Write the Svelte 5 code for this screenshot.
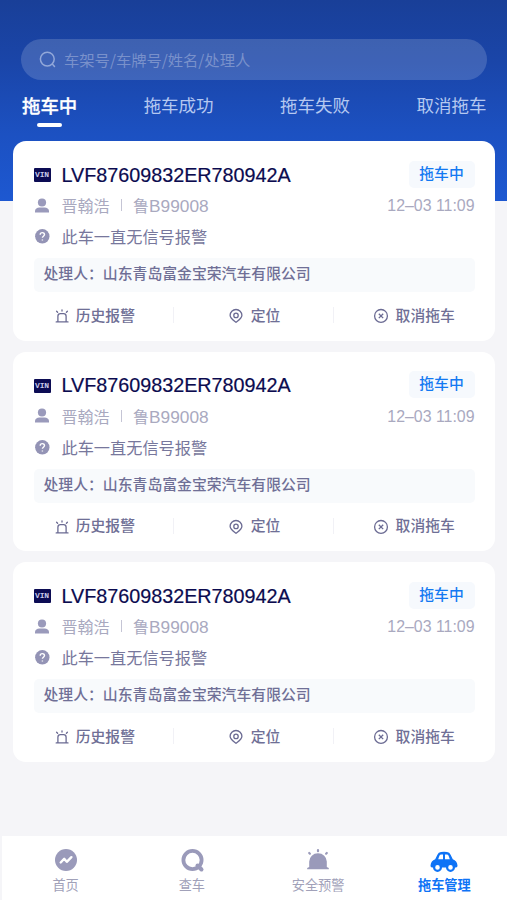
<script>
  const tabs = ['拖车中', '拖车成功', '拖车失败', '取消拖车'];
  const cards = [1, 2, 3];
</script>

<div class="page">
  <header>
    <div class="search">
      <svg width="18" height="18" viewBox="0 0 18 18" fill="none" stroke="#92a8d9" stroke-width="1.5" stroke-linecap="round"><circle cx="8.3" cy="9.1" r="6.9" /><path d="M13.3 14.1l2.2 2.4" /></svg>
      <span>车架号/车牌号/姓名/处理人</span>
    </div>
    <nav class="tabs">
      {#each tabs as tab, i}
        <span class="tab" class:active={i === 0}>{tab}</span>
      {/each}
    </nav>
  </header>

  <main>
    {#each cards as card (card)}
      <article>
        <div class="row title">
          <span class="icon"><span class="vinbox">VIN</span></span>
          <span class="vin">LVF87609832ER780942A</span>
          <span class="badge">拖车中</span>
        </div>
        <div class="row person">
          <span class="icon"><svg width="14" height="15" viewBox="0 0 14 15" fill="#9a9abb"><circle cx="7" cy="4.5" r="4.1" /><path d="M0 14.4v-1.7c0-2 2.2-3 4.3-3.3h5.4c2.1.3 4.3 1.3 4.3 3.3v1.7z" /></svg></span>
          <span>晋翰浩</span><i></i><span>鲁<b>B99008</b></span>
          <time>12–03 11:09</time>
        </div>
        <div class="row reason">
          <span class="icon"><svg width="15" height="15" viewBox="0 0 15 15"><circle cx="7.3" cy="7.3" r="7.2" fill="#9393b5" /><path d="M5.2 5.8c0-2.8 4.3-2.8 4.3-.2 0 1.5-2.1 1.7-2.1 3.2M7.4 10.4v1.2" fill="none" stroke="#fff" stroke-width="1.4" /></svg></span>
          <span>此车一直无信号报警</span>
        </div>
        <div class="handler">处理人：山东青岛富金宝荣汽车有限公司</div>
        <div class="actions">
          <div class="act">
            <svg width="16" height="16" viewBox="0 0 16 16" fill="none" stroke="#6b6b93" stroke-width="1.3" stroke-linecap="round"><path d="M2.2 14.9h11.8M3.9 14.9V9.2a2.5 2.5 0 0 1 2.5-2.5h3.2a2.5 2.5 0 0 1 2.5 2.5v5.7M8 2.8v1.2M2.6 4.2l1 1M13.4 4.2l-1 1" /></svg>
            <span>历史报警</span>
          </div>
          <div class="act">
            <svg width="16" height="16" viewBox="0 0 16 16" fill="none" stroke="#6b6b93" stroke-width="1.3"><path d="M8 15.3C5.2 13.2 2.1 11.4 2.1 8.3a5.9 5.8 0 0 1 11.8 0c0 3.1-3.1 4.9-5.9 7z" /><circle cx="8" cy="8.4" r="2.2" /></svg>
            <span>定位</span>
          </div>
          <div class="act">
            <svg width="16" height="16" viewBox="0 0 16 16" fill="none" stroke="#6b6b93" stroke-width="1.3"><circle cx="8" cy="8.9" r="6.4" /><path d="M5.8 6.7l4.4 4.4M10.2 6.7l-4.4 4.4" /></svg>
            <span>取消拖车</span>
          </div>
        </div>
      </article>
    {/each}
  </main>

  <footer>
    <div class="nav">
      <svg width="28" height="26" viewBox="0 0 28 26"><circle cx="14" cy="13" r="11" fill="#9a9aba" /><path d="M8.7 15.5l3.5-3.7 2.6 3 4.6-4.6" fill="none" stroke="#fff" stroke-width="2.4" stroke-linecap="round" stroke-linejoin="round" /></svg>
      <span>首页</span>
    </div>
    <div class="nav">
      <svg width="28" height="26" viewBox="0 0 28 26" fill="none" stroke="#9a9aba"><circle cx="14.5" cy="13" r="9.1" stroke-width="3.8" /><path d="M19.5 18.5l4 4" stroke-width="4" stroke-linecap="round" /></svg>
      <span>查车</span>
    </div>
    <div class="nav">
      <svg width="28" height="26" viewBox="0 0 28 26" fill="#9a9aba"><path d="M5.2 20V14.5a8.8 8.3 0 0 1 17.6 0V20l2 1v1.3H3.2V21z" /><path d="M14 3v1.2M5.2 6l.7.7M22.8 6l-.7.7" stroke="#9a9aba" stroke-width="2.2" stroke-linecap="round" /></svg>
      <span>安全预警</span>
    </div>
    <div class="nav current">
      <svg width="28" height="26" viewBox="0 0 28 26"><path d="M5.2 12.2l2.2-4.4Q8.4 5.2 11 5q3-.4 6 0 2.6.2 3.6 2.8l2.2 4.4q4.2 1.5 4.7 6.3.1 2-1.6 2H2.1q-1.7 0-1.6-2 .5-4.8 4.7-6.3z" fill="#0e73f6" /><path d="M13 7.4v4.8H8.2l1.2-3.4q.5-1.4 2-1.4zM15 7.4v4.8h4.8l-1.2-3.4q-.5-1.4-2-1.4z" fill="#fff" /><g fill="#fff" stroke="#0e73f6" stroke-width="2.2"><circle cx="7.5" cy="20.4" r="3.4" /><circle cx="20.5" cy="20.4" r="3.4" /></g></svg>
      <span>拖车管理</span>
    </div>
  </footer>
</div>

<style>
  :global(body) { margin: 0; }
  .page {
    box-sizing: border-box;
    width: 507px;
    height: 900px;
    overflow: hidden;
    display: flex;
    flex-direction: column;
    background: linear-gradient(#193f98 0, #1a45a8 60px, #1c51c2 135px, #1d58d1 201px, #f5f5f8 201px);
    font-family: "Liberation Sans", "Noto Sans CJK SC", sans-serif;
    white-space: nowrap;
  }
  header { height: 141px; flex: none; }
  .search {
    box-sizing: border-box;
    height: 41px;
    margin: 38.5px 20px 0 21px;
    padding-left: 18px;
    display: flex;
    align-items: center;
    gap: 7px;
    border-radius: 21px;
    background: rgba(255, 255, 255, .16);
    color: #7991cb;
    font: 15.3px/40px "Noto Sans CJK SC", sans-serif;
  }
  .tabs {
    display: flex;
    justify-content: space-between;
    margin: 12.5px 20.5px 0 22px;
    height: 36px;
  }
  .tab { font: 17.5px/25px "Noto Sans CJK SC", sans-serif; color: #b5c8f0; }
  .tab.active {
    display: flex;
    flex-direction: column;
    align-items: center;
    font-size: 18.4px;
    font-weight: 500;
    -webkit-text-stroke: .3px #fff;
    color: #fff;
    line-height: 26px;
  }
  .tab.active::after { content: ""; width: 25px; height: 4px; margin-top: 5px; border-radius: 2px; background: #fff; }

  main { flex: 1; padding: 0 12.5px; display: flex; flex-direction: column; gap: 11px; }
  article {
    box-sizing: border-box;
    height: 199.5px;
    padding: 18px 20px 0 21px;
    background: #fff;
    border-radius: 13px;
    color: #6f6f96;
  }
  .row { display: flex; align-items: center; }
  .icon { width: 17px; margin-right: 11px; display: flex; justify-content: center; flex: none; }
  .title { height: 32px; }
  .vinbox {
    width: 17px;
    height: 14px;
    background: #0c0c54;
    color: #c9c9e8;
    font: 700 8px/14px "Liberation Mono", monospace;
    letter-spacing: -.2px;
    text-align: center;
    border-radius: 1px;
  }
  .vin { font-size: 19.75px; color: #0b0b4f; -webkit-text-stroke: .2px #0b0b4f; }
  .badge {
    margin: -2px 0 0 auto;
    width: 66px;
    height: 27px;
    border-radius: 5px;
    background: #f6f9fd;
    color: #1479f2;
    font: 500 14.8px/24px "Noto Sans CJK SC", sans-serif;
    text-align: center;
  }
  .person { height: 28px; font-size: 16px; color: #a9a9bf; }
  .person i { width: 1px; height: 12px; margin: 0 11.5px 0 11px; background: #c5c5d5; }
  .person b { font-weight: 400; font-size: 17.3px; }
  time { margin: 2px 0 0 auto; font-size: 15.9px; }
  .reason { height: 33px; margin-top: 1px; font-size: 16.2px; color: #77779c; }
  .reason span:last-child { margin-top: -1px; }
  .handler {
    height: 34px;
    margin-top: 5px;
    padding-left: 10px;
    border-radius: 5px;
    background: #f8fafc;
    font: 500 14.85px/30px "Noto Sans CJK SC", sans-serif;
  }
  .actions { display: flex; height: 46px; margin: 0 -20px 0 -21px; }
  .act {
    flex: 1;
    display: flex;
    align-items: center;
    justify-content: center;
    gap: 7px;
    font: 500 14.8px/22px "Noto Sans CJK SC", sans-serif;
    background: linear-gradient(#f1f1f6, #f1f1f6) right center / 1px 16px no-repeat;
  }
  .act span { margin-top: -1px; }
  .act:first-child { padding-left: 2px; gap: 6px; }
  .act:last-child { background: none; padding-right: 1px; }

  footer {
    box-sizing: border-box;
    flex: none;
    height: 64px;
    margin-left: 2px;
    padding-top: 11px;
    display: flex;
    background: #fff;
  }
  .nav {
    flex: 1;
    display: flex;
    flex-direction: column;
    align-items: center;
    padding-left: 1px;
    color: #a1a1b9;
    font: 13.2px/20px "Noto Sans CJK SC", sans-serif;
  }
  .nav span { margin-top: 2px; }
  .nav.current { color: #0e73f6; font-weight: 700; }
</style>
